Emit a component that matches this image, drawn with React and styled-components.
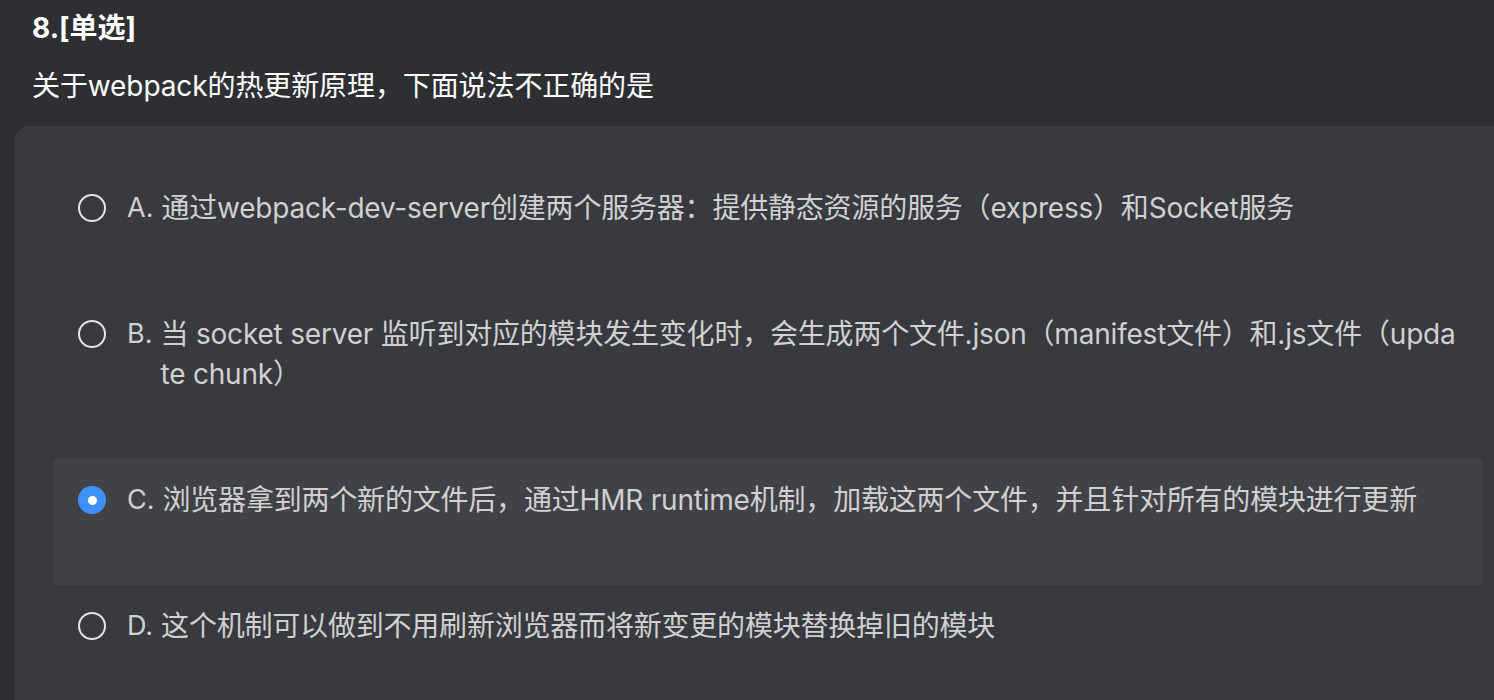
import React from "react";
import styled, { createGlobalStyle } from "styled-components";

const Global = createGlobalStyle`
  html, body {
    margin: 0;
    padding: 0;
    background: #2e2f33;
    overflow: hidden;
  }
  body {
    font-family: "Inter", "Noto Sans CJK SC", sans-serif;
    -webkit-font-smoothing: antialiased;
  }
`;

const Page = styled.div`
  width: 1522px;
  min-height: 700px;
  padding: 8px 0 0 14px;
  box-sizing: border-box;
`;

const Heading = styled.div`
  padding-left: 18px;
  font-size: 28px;
  line-height: 40px;
  font-weight: 700;
  color: #ffffff;
`;

const Question = styled.div`
  margin-top: 18px;
  padding-left: 18px;
  font-size: 28px;
  line-height: 40px;
  font-weight: 400;
  letter-spacing: -0.1px;
  color: #ffffff;
`;

const Card = styled.div`
  margin-top: 20px;
  background: #383a3f;
  border-radius: 16px;
  padding: 41px 40px;
`;

const Option = styled.div`
  display: flex;
  align-items: flex-start;
  padding: 21px 20px 65px 24px;
  background: ${(p) => (p.$active ? "#414247" : "transparent")};
`;

const Radio = styled.span`
  flex: none;
  width: 28px;
  height: 28px;
  margin-top: 6px;
  border-radius: 50%;
  box-sizing: border-box;
  display: flex;
  align-items: center;
  justify-content: center;
  border: ${(p) => (p.$checked ? "none" : "2px solid #e4e4e4")};
  background: ${(p) => (p.$checked ? "#4091f7" : "transparent")};
  &::after {
    content: "";
    display: ${(p) => (p.$checked ? "block" : "none")};
    width: 9px;
    height: 9px;
    border-radius: 50%;
    background: #ffffff;
  }
`;

const Label = styled.span`
  flex: none;
  margin-left: 21px;
  margin-right: 8px;
  font-size: 27px;
  line-height: 40px;
  color: #d0d0d0;
`;

const Text = styled.span`
  flex: 1;
  min-width: 0;
  font-size: 28px;
  line-height: 40px;
  letter-spacing: -0.2px;
  color: #d0d0d0;
  word-break: break-all;
`;

const options = [
  {
    key: "A",
    text: "通过webpack-dev-server创建两个服务器：提供静态资源的服务（express）和Socket服务",
  },
  {
    key: "B",
    text: "当 socket server 监听到对应的模块发生变化时，会生成两个文件.json（manifest文件）和.js文件（update chunk）",
  },
  {
    key: "C",
    text: "浏览器拿到两个新的文件后，通过HMR runtime机制，加载这两个文件，并且针对所有的模块进行更新",
    checked: true,
  },
  {
    key: "D",
    text: "这个机制可以做到不用刷新浏览器而将新变更的模块替换掉旧的模块",
  },
];

export default function App() {
  return (
    <>
      <Global />
      <Page>
        <Heading>8.[单选]</Heading>
        <Question>关于webpack的热更新原理，下面说法不正确的是</Question>
        <Card>
          {options.map((o) => (
            <Option key={o.key} $active={o.checked}>
              <Radio $checked={o.checked} />
              <Label>{o.key}.</Label>
              <Text>{o.text}</Text>
            </Option>
          ))}
        </Card>
      </Page>
    </>
  );
}
